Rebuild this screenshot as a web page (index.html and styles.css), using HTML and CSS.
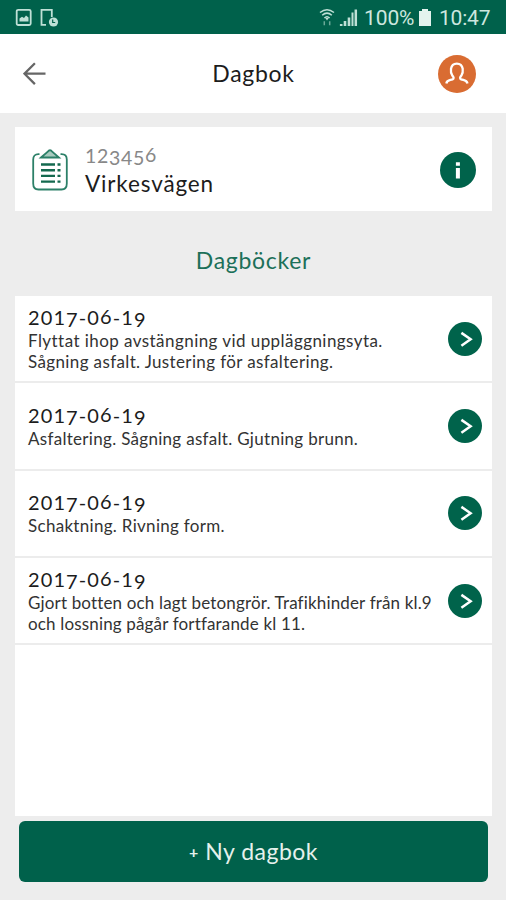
FILE: index.html
```html
<!DOCTYPE html>
<html lang="sv">
<head>
<meta charset="utf-8">
<title>Dagbok</title>
<link rel="stylesheet" href="styles.css">
</head>
<body>
<svg class="sprite" aria-hidden="true">
  <symbol id="go" viewBox="0 0 34 34"><circle cx="17" cy="17" r="17" fill="#00634b"/><path d="M13.4 10.900 22.600 17.300l-9.200 6.400" fill="none" stroke="#fff" stroke-width="2.500"/></symbol>
</svg>
<div class="status">
  <svg class="status-left" viewBox="0 0 44 20" fill="none" stroke="#bfe0d6" stroke-width="1.8">
    <rect x="1.7" y="1.8" width="14" height="15.2" rx="1.5"/>
    <path d="M4.500 13.500v-3l2.500-1.800 2 1.300 2-2.500 2.500 2v4Z" fill="#bfe0d6" stroke="none"/>
    <path d="M31 16.800h-4.500V1.800h10.300v7.200"/>
    <circle cx="38.500" cy="14" r="4.600" fill="#bfe0d6" stroke="none"/>
    <path d="M37.700 11.500v3h2.500" stroke="#00614b" stroke-width="1.2"/>
  </svg>
  <div class="status-right">
    <svg class="radio" viewBox="0 0 40 20" fill="none" stroke="#bfe0d6" stroke-width="1.5">
      <path d="M1 4.5Q8 -1 15 4.5M3.2 7.3Q8 3 12.8 7.3M5.4 10Q8 7.5 10.6 10"/>
      <path d="M6.3 10h3.4L8 12.4Z" fill="#bfe0d6" stroke="none"/>
      <path d="M5.3 13.2v4M10.7 13.2v4" stroke="#6ba998"/>
      <path d="M22.2 18v-2M26 18v-5M30 18v-8.500" stroke-width="2.6"/>
      <path d="M33.500 18V4.500" stroke-width="2"/><path d="M36.800 18V1.500" stroke-width="2.5"/>
    </svg>
    <span class="percent">100%</span>
    <svg class="battery" viewBox="0 0 12 17"><path d="M3 0h6v2h3v15H0V2h3Z" fill="#e3f3ee"/></svg>
    <span class="clock">10:47</span>
  </div>
</div>
<header class="bar">
  <svg class="back" viewBox="0 0 24 24" fill="none" stroke="#666" stroke-width="2.300"><path d="M22.500 11.700H1.500M11.900 1.300 1.500 11.700l10.400 10.400"/></svg>
  <h1 class="title">Dagbok</h1>
  <svg class="avatar" viewBox="0 0 38 38"><circle cx="19" cy="19" r="19" fill="#d96c32"/><path d="M8.300 28.400C9 25.100 11.100 25.500 14.500 24.400 16.400 23.500 15.600 22.200 14.300 20.500 12.800 18.500 12.700 16 13 13.800 13.500 10.800 15.800 8.600 18.800 8.600s5.400 2.200 5.900 5.200c.3 2.200.1 4.700-1.300 6.700-1.300 1.700-2.100 3-.2 3.900 3.500 1.100 5.500.7 6.300 4" fill="none" stroke="#fff" stroke-width="2.300"/></svg>
</header>
<main>
  <section class="project">
    <svg class="clip" viewBox="0 0 36 42" fill="none" stroke="#2c8068" stroke-width="1.800">
      <path d="M7.500 5.200H6.500Q1.200 5.200 1.200 10.500V34.500Q1.200 40.500 6.500 40.500H29.500Q34.800 40.500 34.800 34.500V10.500Q34.800 5.200 29.500 5.200H28.500"/>
      <path d="M9 8.500 15.500 3Q18-.5 20.500 3L27 8.500Z" fill="#a8cbbf"/>
      <path d="M9 15.500h14M9 21.200h14M9 26.900h14M9 32.600h14M25.500 15.500h3M25.500 21.200h3M25.500 26.900h3M25.500 32.600h3" stroke="#14694f" stroke-width="2.400"/>
    </svg>
    <div class="project-text">
      <div class="number">12<span class="low">345</span><span class="high">6</span></div>
      <div class="street">Virkesvägen</div>
    </div>
    <svg class="info" viewBox="0 0 36 36"><circle cx="18" cy="18" r="18" fill="#00634b"/><path d="M15.900 10.300h4v3.500h-4ZM15.900 16h4v10.500h-4Z" fill="#fff"/></svg>
  </section>
  <h2 class="heading">Dagböcker</h2>
  <section class="list">
    <article class="row">
      <div class="entry"><div class="date">201<span class="low">7</span>-0<span class="high">6</span>-1<span class="low">9</span></div>
        <p><span class="t1">Flyttat ihop avstängning vid uppläggningsyta.</span><br><span class="t2">Sågning asfalt. Justering för asfaltering.</span></p></div>
      <svg class="go"><use href="#go"/></svg>
    </article>
    <article class="row">
      <div class="entry"><div class="date">201<span class="low">7</span>-0<span class="high">6</span>-1<span class="low">9</span></div>
        <p>Asfaltering. Sågning asfalt. Gjutning brunn.</p></div>
      <svg class="go"><use href="#go"/></svg>
    </article>
    <article class="row">
      <div class="entry"><div class="date">201<span class="low">7</span>-0<span class="high">6</span>-1<span class="low">9</span></div>
        <p>Schaktning. Rivning form.</p></div>
      <svg class="go"><use href="#go"/></svg>
    </article>
    <article class="row">
      <div class="entry"><div class="date">201<span class="low">7</span>-0<span class="high">6</span>-1<span class="low">9</span></div>
        <p class="tight">Gjort botten och lagt betongrör. Trafikhinder från kl.9<br>och lossning pågår fortfarande kl 11.</p></div>
      <svg class="go"><use href="#go"/></svg>
    </article>
  </section>
  <button class="new"><span class="plus">+</span> Ny dagbok</button>
</main>
</body>
</html>
```
FILE: styles.css
```css
* { box-sizing: border-box; }
body { margin: 0; height: 900px; display: flex; flex-direction: column; background: #ededed; color: #1c1c1c; font-family: Lato, "Liberation Sans", sans-serif; overflow: hidden; }
h1, h2, p { margin: 0; font-weight: 400; }
svg { display: block; flex: none; }
.sprite { position: absolute; width: 0; height: 0; }
.status { height: 34px; flex: none; background: #00614b; display: flex; justify-content: space-between; padding: 0 16px 0 15px; color: #cde7df; font: 21px/36px Roboto, sans-serif; }
.status-left { width: 44px; height: 20px; margin-top: 8px; }
.status-right { display: flex; }
.radio { width: 40px; height: 20px; margin: 8px 5px 0 0; }
.percent { width: 50px; letter-spacing: -0.1px; }
.battery { width: 12px; height: 17px; margin: 9px 8px 0 5px; }
.clock { width: 51px; letter-spacing: -0.2px; }
.bar { height: 79px; flex: none; background: #fff; display: grid; grid-template-columns: 60px 1fr 60px; align-items: center; padding: 0 23px; }
.back { width: 24px; height: 24px; }
.title { font-size: 23px; line-height: 26px; margin-bottom: 2px; text-align: center; letter-spacing: .7px; text-indent: 1px; }
.avatar { width: 38px; height: 38px; justify-self: end; margin-right: 7px; }
main { flex: 1; display: flex; flex-direction: column; padding: 14px 14px 0 15px; }
.project { height: 84px; flex: none; background: #fff; display: flex; align-items: center; padding: 0 16px 0 17px; }
.clip { width: 36px; height: 42px; margin-top: 2px; }
.project-text { flex: 1; margin-left: 17px; }
.number { font-size: 19.500px; line-height: 28px; color: #888; letter-spacing: .7px; }
.street { font-size: 22.500px; line-height: 27px; letter-spacing: .85px; }
.low { position: relative; top: 2px; }
.high { position: relative; top: -1px; }
.info { width: 36px; height: 36px; margin-top: 1px; }
.heading { height: 85px; flex: none; line-height: 98px; text-align: center; color: #1c7059; font-size: 23px; letter-spacing: .7px; }
.list { height: 520px; flex: none; background: #fff; }
.row { height: 87.300px; display: flex; align-items: center; padding: 0 10px 0 13px; border-bottom: 2px solid #ececec; }
.entry { flex: 1; min-width: 0; padding-top: 1px; white-space: nowrap; }
.date { margin: -1px 0 1px; font-size: 20px; line-height: 24px; letter-spacing: 1.100px; }
.entry p { font-size: 17px; line-height: 21px; color: #333; letter-spacing: .3px; }
.entry .tight { letter-spacing: .16px; }
.t1 { letter-spacing: .44px; }
.t2 { letter-spacing: .37px; }
.go { width: 34px; height: 34px; }
.new { margin: 5px 4px 0; padding: 0 0 2px; height: 61px; flex: none; border: 0; border-radius: 6px; background: #00614b; color: #e5f1ec; font: 23px Lato, sans-serif; letter-spacing: .5px; }
.plus { font-size: 16px; font-weight: 700; position: relative; top: -2px; }
```
